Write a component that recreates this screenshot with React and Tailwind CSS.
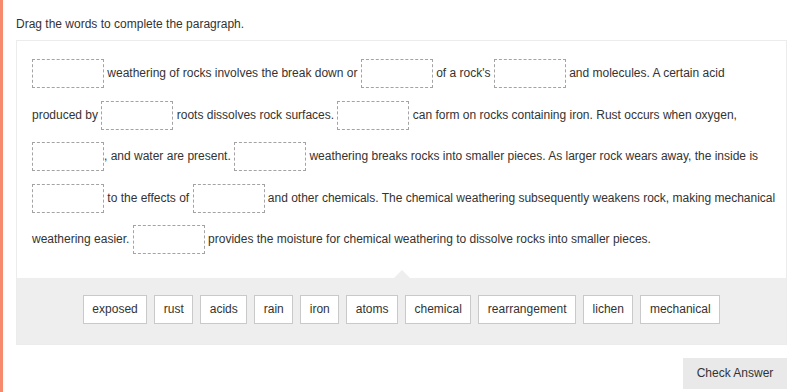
const G = { gap: true };

// reference breaks the paragraph into these five lines
const lines = [
  [G, " weathering of rocks involves the break down or ", G, " of a rock's ", G, " and molecules. A certain acid"],
  ["produced by ", G, " roots dissolves rock surfaces. ", G, " can form on rocks containing iron. Rust occurs when oxygen,"],
  [G, ", and water are present. ", G, " weathering breaks rocks into smaller pieces. As larger rock wears away, the inside is"],
  [G, " to the effects of ", G, " and other chemicals. The chemical weathering subsequently weakens rock, making mechanical"],
  ["weathering easier. ", G, " provides the moisture for chemical weathering to dissolve rocks into smaller pieces."],
];

const words = ["exposed", "rust", "acids", "rain", "iron", "atoms", "chemical", "rearrangement", "lichen", "mechanical"];

function DropZone() {
  return <span className="inline-block h-[29px] w-[72px] border border-dashed border-[#a3a3a3] bg-white align-middle" />;
}

export default function App() {
  return (
    <div className="flex min-h-[392px] bg-white font-['Liberation_Sans',Arial,sans-serif] text-[12px] text-[#333]">
      <div className="w-[3px] shrink-0 bg-[#f58a6c]" />
      <div className="flex-1 pl-[13px] pr-[13px]">
        <p className="pt-4 leading-4">Drag the words to complete the paragraph.</p>

        <div className="mt-2 border border-[#ececec]">
          <div className="pl-[15px] pr-[8px] pt-[12px] pb-[17px] leading-[41.5px] whitespace-nowrap">
            {lines.map((line, li) => (
              <div key={li}>
                {line.map((seg, i) => (seg.gap ? <DropZone key={i} /> : <span key={i}>{seg}</span>))}
              </div>
            ))}
          </div>

          <div className="relative bg-[#eeeeee] pt-[17px] pb-[20px]">
            <span className="absolute -top-2 left-1/2 h-0 w-0 -translate-x-1/2 border-x-8 border-b-8 border-x-transparent border-b-[#eeeeee]" />
            <div className="flex flex-wrap justify-center gap-[7px]">
              {words.map((w) => (
                <span key={w} className="flex h-[29px] items-center border border-[#c9c9c9] bg-white px-[8.5px]">
                  {w}
                </span>
              ))}
            </div>
          </div>
        </div>

        <div className="mt-[13px] flex justify-end">
          <button className="h-[31px] w-[104px] bg-[#e9e9e9] text-[12px] text-[#333]">Check Answer</button>
        </div>
      </div>
    </div>
  );
}
